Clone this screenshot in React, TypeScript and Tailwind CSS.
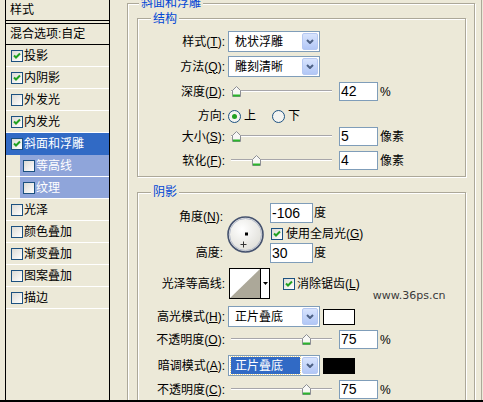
import React from 'react';

const sans = "font-['Liberation_Sans','Noto_Sans_CJK_SC',sans-serif]";
const num = "font-['Liberation_Sans',sans-serif]";

type Effect = { name: string; on?: boolean; selected?: boolean; sub?: boolean };

const effects: Effect[] = [
  { name: '投影', on: true },
  { name: '内阴影', on: true },
  { name: '外发光' },
  { name: '内发光', on: true },
  { name: '斜面和浮雕', on: true, selected: true },
  { name: '等高线', sub: true },
  { name: '纹理', sub: true },
  { name: '光泽' },
  { name: '颜色叠加' },
  { name: '渐变叠加' },
  { name: '图案叠加' },
  { name: '描边' },
];

function Check({ on }: { on?: boolean }) {
  return (
    <span className="flex h-[12px] w-[12px] shrink-0 items-center justify-center border border-[#1C5180] bg-linear-to-br from-[#DCDBD5] to-white">
      {on && (
        <svg width="8" height="8" viewBox="0 0 8 8">
          <path d="M1 3.5 L3 5.5 L7 1.5" stroke="#21A121" strokeWidth="2" fill="none" />
        </svg>
      )}
    </span>
  );
}

function Key({ text, k, colon = true }: { text: string; k?: string; colon?: boolean }) {
  return (
    <>
      {text}
      {k && (
        <>
          (<span className="underline underline-offset-[1px]">{k}</span>)
        </>
      )}
      {colon && ':'}
    </>
  );
}

function Select({ value, focus }: { value: string; focus?: boolean }) {
  return (
    <div className="flex h-[21px] w-[92px] shrink-0 border border-[#7F9DB9] bg-white p-[1px]">
      <div className="flex-1 pl-[1px] pr-[2px]">
        <div
          className={`flex h-full items-center pl-[4px] ${
            focus ? 'bg-[#316AC5] text-white outline-1 outline-dotted outline-[#E8D38A]' : ''
          }`}
        >
          {value}
        </div>
      </div>
      <div className="flex w-[16px] items-center justify-center rounded-[2px] border border-[#B5C8F2] bg-linear-to-b from-[#D8E4FD] to-[#B2C7F6]">
        <svg width="8" height="5" viewBox="0 0 8 5">
          <path d="M1 1 L4 4 L7 1" stroke="#4D6185" strokeWidth="2" fill="none" />
        </svg>
      </div>
    </div>
  );
}

function Slider({ pos }: { pos: string }) {
  return (
    <div className="relative ml-[3px] h-[11px] w-[101px] shrink-0">
      <div className="absolute inset-x-0 top-[4px] h-[2px] border-t border-[#A7A6AA] bg-white" />
      <svg className={`absolute top-0 ${pos}`} width="9" height="11" viewBox="0 0 9 11">
        <path d="M0.5 4.5 L4.5 0.5 L8.5 4.5 V10.5 H0.5 Z" fill="#F7F7F4" stroke="#8C8E94" />
        <path d="M1 9.5 H8" stroke="#2BB52B" strokeWidth="2" />
      </svg>
    </div>
  );
}

function Field({ v, w = 'w-[39px]', h = 'h-[19px]' }: { v: string; w?: string; h?: string }) {
  return (
    <div className={`${w} ${h} flex shrink-0 items-center border border-[#7F9DB9] bg-white pl-[1px] text-[14px] ${num}`}>
      {v}
    </div>
  );
}

function Radio({ on }: { on?: boolean }) {
  return (
    <svg width="13" height="13" viewBox="0 0 13 13" className="shrink-0">
      <circle cx="6.5" cy="6.5" r="6" fill="#F4F4F0" stroke="#1C5180" />
      {on && <circle cx="6.5" cy="6.5" r="2.5" fill="#21A121" />}
    </svg>
  );
}

function Row({ label, className, children }: { label: React.ReactNode; className: string; children: React.ReactNode }) {
  return (
    <div className={`flex shrink-0 items-center ${className}`}>
      <div className="w-[87px] shrink-0 text-right leading-[14px]">{label}</div>
      <div className="ml-[3px] flex items-center">{children}</div>
    </div>
  );
}

function Group({
  title,
  titleTop,
  className,
  children,
}: {
  title: string;
  titleTop: string;
  className: string;
  children: React.ReactNode;
}) {
  return (
    <div
      className={`relative ml-[9px] flex w-[329px] shrink-0 flex-col border border-[#ACA899] shadow-[inset_1px_1px_0_#fff,1px_1px_0_#fff] ${className}`}
    >
      <span className={`absolute left-[13px] ${titleTop} bg-[#ECE9D8] px-[2px] leading-[14px] text-[#0046D5]`}>{title}</span>
      {children}
    </div>
  );
}

function AngleDial() {
  return (
    <svg className="ml-[4px] mt-[13px] shrink-0" width="37" height="37" viewBox="0 0 37 37">
      <defs>
        <radialGradient id="dial" cx="40%" cy="35%" r="70%">
          <stop offset="0" stopColor="#FFFFFF" />
          <stop offset="1" stopColor="#DEDDD6" />
        </radialGradient>
      </defs>
      <circle cx="18.5" cy="18.5" r="17.5" fill="url(#dial)" stroke="#45526E" strokeWidth="1.6" />
      <circle cx="18.5" cy="18.5" r="16" fill="none" stroke="#B4BBCB" strokeWidth="1" />
      <rect x="18" y="16.5" width="3" height="3" fill="#000" />
      <path d="M16.5 25.5 V31.5 M13.5 28.5 H19.5" stroke="#333" strokeWidth="1" />
    </svg>
  );
}

function Contour() {
  return (
    <div className="flex h-[31px] w-[41px] shrink-0 border border-black bg-white">
      <div className="h-full w-[31px] border-r border-black">
        <svg width="30" height="29" viewBox="0 0 30 29">
          <polygon points="0,29 30,0 30,29" fill="#ACA899" />
        </svg>
      </div>
      <div className="flex flex-1 items-center justify-center">
        <svg width="5" height="3" viewBox="0 0 5 3">
          <polygon points="0,0 5,0 2.5,3" fill="#000" />
        </svg>
      </div>
    </div>
  );
}

export default function App() {
  return (
    <div className={`flex h-[402px] w-[483px] overflow-hidden border-b-2 border-black bg-[#ECE9D8] text-[12px] text-black ${sans}`}>
      <div className="w-[5px] shrink-0" />

      {/* effect list */}
      <div className="flex h-full w-[105px] shrink-0 flex-col border-x border-black">
        <div className="flex h-[21px] shrink-0 items-center border-b border-black pl-[4px]">样式</div>
        <div className="h-[2px] shrink-0" />
        <div className="flex h-[22px] shrink-0 items-center border-y border-black pl-[4px]">混合选项:自定</div>
        {effects.map((e) => (
          <div
            key={e.name}
            className={`flex h-[22px] shrink-0 border-b ${
              e.selected ? 'border-[#316AC5] bg-[#316AC5] text-white' : 'border-white'
            }`}
          >
            <div
              className={`flex flex-1 items-center ${
                e.sub ? 'ml-[14px] bg-[#8FA5DA] pl-[3px] text-white' : 'pl-[5px]'
              }`}
            >
              <Check on={e.on} />
              <span className="ml-[1px]">{e.name}</span>
            </div>
          </div>
        ))}
      </div>

      {/* bevel and emboss */}
      <div className="relative ml-[17px] mt-[3px] flex h-[430px] w-[348px] shrink-0 flex-col border border-[#ACA899] shadow-[inset_1px_1px_0_#fff,1px_1px_0_#fff]">
        <span className="absolute left-[11px] top-[-8px] bg-[#ECE9D8] px-[2px] leading-[14px] text-[#0046D5]">斜面和浮雕</span>

        <Group title="结构" titleTop="top-[-7px]" className="mt-[14px] h-[159px]">
          <Row label={<Key text="样式" k="T" />} className="mt-[12px] h-[21px]">
            <Select value="枕状浮雕" />
          </Row>
          <Row label={<Key text="方法" k="Q" />} className="mt-[4px] h-[21px]">
            <Select value="雕刻清晰" />
          </Row>
          <Row label={<Key text="深度" k="D" />} className="mt-[5px] h-[19px]">
            <Slider pos="left-[1px]" />
            <div className="ml-[7px]">
              <Field v="42" />
            </div>
            <span className={`ml-[2px] ${num}`}>%</span>
          </Row>
          <Row label="方向:" className="mt-[8px] h-[14px]">
            <Radio on />
            <span className="ml-[3px]">上</span>
            <div className="ml-[16px]">
              <Radio />
            </div>
            <span className="ml-[3px]">下</span>
          </Row>
          <Row label={<Key text="大小" k="S" />} className="mt-[4px] h-[19px]">
            <Slider pos="left-[1px]" />
            <div className="ml-[7px]">
              <Field v="5" />
            </div>
            <span className="ml-[2px]">像素</span>
          </Row>
          <Row label={<Key text="软化" k="F" />} className="mt-[5px] h-[19px]">
            <Slider pos="left-[21px]" />
            <div className="ml-[7px]">
              <Field v="4" />
            </div>
            <span className="ml-[2px]">像素</span>
          </Row>
        </Group>

        <Group title="阴影" titleTop="top-[-8px]" className="mt-[15px] h-[260px]">
          <div className="mt-[10px] flex h-[60px] shrink-0">
            <div className="flex w-[85px] shrink-0 flex-col items-end leading-[14px]">
              <span className="mt-[7px]">
                <Key text="角度" k="N" />
              </span>
              <span className="mt-[22px]">高度:</span>
            </div>
            <AngleDial />
            <div className="ml-[6px] flex flex-col">
              <div className="flex items-center">
                <Field v="-106" w="w-[43px]" h="h-[20px]" />
                <span className="ml-[1px]">度</span>
              </div>
              <div className="ml-[1px] mt-[4px] flex h-[13px] items-center">
                <Check on />
                <span className="ml-[3px] leading-[14px]">
                  <Key text="使用全局光" k="G" colon={false} />
                </span>
              </div>
              <div className="mt-[3px] flex items-center">
                <Field v="30" w="w-[43px]" h="h-[20px]" />
                <span className="ml-[1px]">度</span>
              </div>
            </div>
          </div>

          <div className="mt-[5px] flex h-[31px] shrink-0 items-center">
            <div className="w-[87px] shrink-0 text-right leading-[14px]">光泽等高线:</div>
            <div className="ml-[4px]">
              <Contour />
            </div>
            <div className="ml-[13px]">
              <Check on />
            </div>
            <span className="ml-[2px] leading-[14px]">
              <Key text="消除锯齿" k="L" colon={false} />
            </span>
            <span className="-mb-[4px] ml-[13px] self-end font-['DejaVu_Sans',sans-serif] text-[11px] leading-[14px] text-[#3A3A3A]">
              www.36ps.cn
            </span>
          </div>

          <Row label={<Key text="高光模式" k="H" />} className="mt-[7px] h-[21px]">
            <Select value="正片叠底" />
            <div className="ml-[3px] h-[16px] w-[32px] border border-black bg-white" />
          </Row>
          <Row label={<Key text="不透明度" k="O" />} className="mt-[3px] h-[19px]">
            <Slider pos="left-[71px]" />
            <div className="ml-[7px]">
              <Field v="75" />
            </div>
            <span className={`ml-[2px] ${num}`}>%</span>
          </Row>
          <Row label={<Key text="暗调模式" k="A" />} className="mt-[6px] h-[21px]">
            <Select value="正片叠底" focus />
            <div className="ml-[3px] h-[16px] w-[32px] border border-black bg-black" />
          </Row>
          <Row label={<Key text="不透明度" k="C" />} className="mt-[4px] h-[19px]">
            <Slider pos="left-[71px]" />
            <div className="ml-[7px]">
              <Field v="75" />
            </div>
            <span className={`ml-[2px] ${num}`}>%</span>
          </Row>
        </Group>
      </div>

      <div className="ml-[6px] h-full w-px shrink-0 bg-[#ACA899]" />
    </div>
  );
}
